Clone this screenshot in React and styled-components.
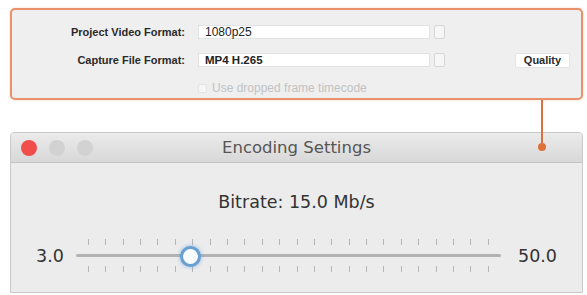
import React from 'react';
import styled, { createGlobalStyle } from 'styled-components';

const GlobalStyle = createGlobalStyle`
  html, body { margin: 0; padding: 0; background: #ffffff; }
  body { font-family: "DejaVu Sans", sans-serif; }
`;

const TICKS = 24;
const MIN = 3;
const MAX = 50;

const Ticks = ({ count }) => (
    <TickRow>
        {Array.from({ length: count }).map((_, i) => <Tick key={i} />)}
    </TickRow>
);

const Slider = ({ value }) => {
    const frac = (value - MIN) / (MAX - MIN);
    return <SliderRow>
        <RangeValue>{MIN.toFixed(1)}</RangeValue>
        <TrackArea>
            <Ticks count={TICKS} />
            <Track />
            <Ticks count={TICKS} />
            <Knob style={{ left: `calc(12px + (100% - 24px) * ${frac})` }} />
        </TrackArea>
        <RangeValue>{MAX.toFixed(1)}</RangeValue>
    </SliderRow>;
};

const App = () => {
    return <Page>
        <GlobalStyle />
        <Panel>
            <Label>Project Video Format:</Label>
            <FieldWrap>
                <Field>1080p25</Field>
                <Stepper />
            </FieldWrap>
            <span />

            <Label>Capture File Format:</Label>
            <FieldWrap>
                <Field bold>MP4 H.265</Field>
                <Stepper />
            </FieldWrap>
            <QualityButton>Quality</QualityButton>

            <span />
            <CheckRow>
                <CheckBox />
                Use dropped frame timecode
            </CheckRow>
            <span />
        </Panel>

        <Connector>
            <Dot />
        </Connector>

        <Window>
            <TitleBar>
                <Lights>
                    <Light color="#f04d4b" />
                    <Light color="#d2d2d2" />
                    <Light color="#d2d2d2" />
                </Lights>
                <Title>Encoding Settings</Title>
            </TitleBar>
            <Body>
                <Bitrate>Bitrate: 15.0 Mb/s</Bitrate>
                <Slider value={15} />
            </Body>
        </Window>
    </Page>;
};

const Page = styled.div`
position: relative;
width: 573px;
padding: 8px 0 0 10px;
`
const Panel = styled.div`
box-sizing: border-box;
height: 92px;
background: #efefef;
border: 2px solid #e9916a;
border-radius: 5px;
box-shadow: 0 0 3px rgba(233, 145, 106, 0.35);
padding: 15px 11px 0 0;
display: grid;
grid-template-columns: 173px 247px 1fr;
grid-auto-rows: 14px;
column-gap: 13px;
row-gap: 14px;
align-items: center;
`
const Label = styled.div`
text-align: right;
font-family: "Liberation Sans", Arial, sans-serif;
font-weight: bold;
font-size: 11px;
color: #2a2a2a;
white-space: nowrap;
`
const FieldWrap = styled.div`
display: flex;
gap: 4px;
height: 14px;
`
const Field = styled.div`
flex: 1;
box-sizing: border-box;
background: #ffffff;
border: 1px solid #e2e2e2;
padding-left: 6px;
font-family: "Liberation Sans", Arial, sans-serif;
font-size: ${p => (p.bold ? '11.5px' : '12px')};
font-weight: ${p => (p.bold ? 'bold' : 'normal')};
line-height: 12px;
color: #222;
`
const Stepper = styled.div`
width: 11px;
box-sizing: border-box;
border: 1px solid #d6d6d6;
border-radius: 2px;
background: #f6f6f6;
`
const QualityButton = styled.div`
justify-self: end;
width: 55px;
height: 15px;
box-sizing: border-box;
background: #ffffff;
border: 1px solid #e4e4e4;
border-radius: 2px;
font-family: "Liberation Sans", Arial, sans-serif;
font-weight: bold;
font-size: 11px;
line-height: 13px;
text-align: center;
color: #2a2a2a;
`
const CheckRow = styled.div`
display: flex;
align-items: center;
gap: 5px;
font-family: "Liberation Sans", Arial, sans-serif;
font-size: 12px;
color: #c2c2c2;
white-space: nowrap;
`
const CheckBox = styled.div`
width: 9px;
height: 9px;
box-sizing: border-box;
border: 1px solid #e4e4e4;
border-radius: 2px;
background: #f6f6f6;
`
const Connector = styled.div`
position: absolute;
left: 541px;
top: 100px;
width: 2px;
height: 47px;
background: #d9703f;
z-index: 2;
`
const Dot = styled.div`
position: absolute;
left: -3px;
bottom: -4px;
width: 8px;
height: 8px;
border-radius: 50%;
background: #e0703a;
`
const Window = styled.div`
margin-top: 32px;
height: 161px;
box-sizing: border-box;
border: 1px solid #c9c9c9;
border-radius: 4px 4px 0 0;
background: #ececec;
display: flex;
flex-direction: column;
overflow: hidden;
`
const TitleBar = styled.div`
height: 30px;
flex-shrink: 0;
box-sizing: border-box;
background: linear-gradient(#ebebeb, #d8d8d8);
border-bottom: 1px solid #c4c4c4;
display: grid;
grid-template-columns: 1fr auto 1fr;
align-items: center;
`
const Lights = styled.div`
display: flex;
gap: 12px;
padding-left: 10px;
`
const Light = styled.div`
width: 16px;
height: 16px;
border-radius: 50%;
background: ${p => p.color};
`
const Title = styled.div`
font-size: 16.5px;
color: #555;
padding-bottom: 1px;
`
const Body = styled.div`
flex: 1;
display: flex;
flex-direction: column;
align-items: center;
padding-top: 29px;
`
const Bitrate = styled.div`
font-size: 17.5px;
color: #333;
margin-bottom: 27px;
`
const SliderRow = styled.div`
align-self: stretch;
display: flex;
align-items: center;
padding: 0 25px 0 25px;
`
const RangeValue = styled.div`
font-size: 17.5px;
color: #333;
`
const TrackArea = styled.div`
position: relative;
flex: 1;
margin: 0 17px 0 12px;
display: flex;
flex-direction: column;
gap: 9px;
`
const TickRow = styled.div`
display: flex;
justify-content: space-between;
padding: 0 12px;
height: 6px;
`
const Tick = styled.div`
width: 1px;
height: 6px;
background: #b5b5b5;
`
const Track = styled.div`
height: 3px;
border-radius: 2px;
background: #b3b3b3;
`
const Knob = styled.div`
position: absolute;
top: 50%;
width: 15px;
height: 15px;
margin: -10px 0 0 -10px;
border-radius: 50%;
background: #fafdff;
border: 3px solid #6a9fd2;
box-shadow: 0 0 4px rgba(90, 150, 220, 0.6);
`

export default App;
